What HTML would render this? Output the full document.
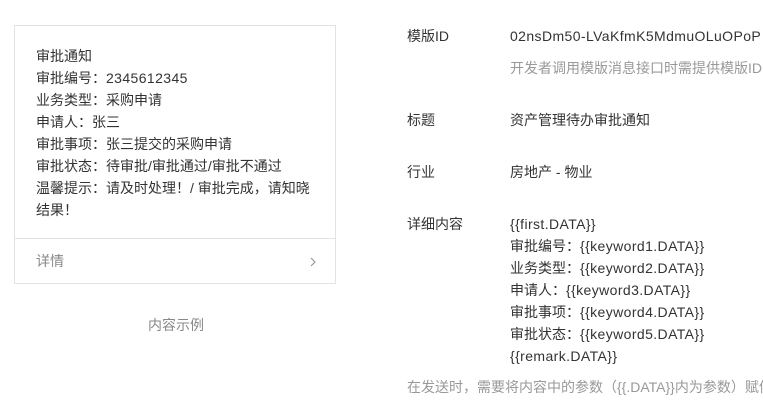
<html style="overflow:hidden"><head><style>
body{margin:0;width:763px;height:404px;background:#fff;overflow:hidden;position:relative;font-family:"Liberation Sans","Noto Sans CJK SC",sans-serif;font-size:14px;color:#333}
.a{position:absolute;white-space:nowrap;line-height:22px}
.card{position:absolute;left:14px;top:25px;width:320px;height:257px;border:1px solid #e3e3e3}
.g{color:#999}
.l{letter-spacing:0.4px}
</style></head><body>
<div class="card">
<div class="a" style="left:21px;top:19px">审批通知<br>审批编号：<span class="l">2345612345</span><br>业务类型：采购申请<br>申请人：张三<br>审批事项：张三提交的采购申请<br>审批状态：待审批/审批通过/审批不通过<br>温馨提示：请及时处理！/ 审批完成，请知晓<br>结果！</div>
<div style="position:absolute;left:0;right:0;top:212px;border-top:1px solid #e3e3e3"></div>
<div class="a g" style="left:21px;top:224px;color:#888">详情</div>
<svg style="position:absolute;left:294px;top:230px" width="8" height="12"><path d="M2 2l4 4-4 4" fill="none" stroke="#999" stroke-width="1.2"/></svg>
</div>
<div class="a" style="left:148px;top:314px;color:#888">内容示例</div>
<div style="position:absolute;left:0;top:0;width:763px;height:404px;overflow:hidden">
<div class="a" style="left:407px;top:25px">模版ID</div>
<div class="a l" style="left:510px;top:25px">02nsDm50-LVaKfmK5MdmuOLuOPoP</div>
<div class="a g" style="left:510px;top:57px">开发者调用模版消息接口时需提供模版ID</div>
<div class="a" style="left:407px;top:109px">标题</div>
<div class="a" style="left:510px;top:109px">资产管理待办审批通知</div>
<div class="a" style="left:407px;top:161px">行业</div>
<div class="a" style="left:510px;top:161px">房地产 - 物业</div>
<div class="a" style="left:407px;top:213px">详细内容</div>
<div class="a" style="left:510px;top:213px"><span class="l">{{first.DATA}}</span><br>审批编号：<span class="l">{{keyword1.DATA}}</span><br>业务类型：<span class="l">{{keyword2.DATA}}</span><br>申请人：<span class="l">{{keyword3.DATA}}</span><br>审批事项：<span class="l">{{keyword4.DATA}}</span><br>审批状态：<span class="l">{{keyword5.DATA}}</span><br><span class="l">{{remark.DATA}}</span></div>
<div class="a g" style="left:407px;top:376px">在发送时，需要将内容中的参数（{{.DATA}}内为参数）赋值替换为需要的信息</div>
</div>
</body></html>
